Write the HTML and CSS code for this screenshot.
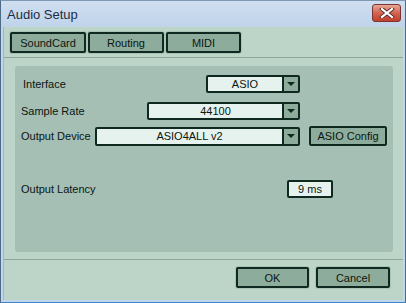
FILE: index.html
```html
<!DOCTYPE html>
<html lang="en">
<head>
    <meta charset="UTF-8">
    <title>Audio Setup</title>
    <link rel="stylesheet" href="styles.css">
</head>
<body>
<div class="window">
    <div class="titlebar">
        <span class="title">Audio Setup</span>
        <div class="close">
            <svg width="16" height="10" viewBox="0 0 16 10">
                <path d="M3 1 L13 9 M13 1 L3 9" stroke="#5a2a2a" stroke-width="4" stroke-linecap="square"/>
                <path d="M3 1 L13 9 M13 1 L3 9" stroke="#ffffff" stroke-width="2.2" stroke-linecap="square"/>
            </svg>
        </div>
    </div>
    <div class="content">
        <div class="tabs">
            <div class="btn tab">SoundCard</div>
            <div class="btn tab">Routing</div>
            <div class="btn tab">MIDI</div>
        </div>
        <div class="panel">
            <div class="row row-interface">
                <span class="label">Interface</span>
                <div class="select w-interface"><span class="value">ASIO</span><span class="arrow"></span></div>
            </div>
            <div class="row row-rate">
                <span class="label">Sample Rate</span>
                <div class="select w-rate"><span class="value">44100</span><span class="arrow"></span></div>
            </div>
            <div class="row row-device">
                <span class="label">Output Device</span>
                <div class="select w-device"><span class="value">ASIO4ALL v2</span><span class="arrow"></span></div>
                <div class="btn config">ASIO Config</div>
            </div>
            <div class="row row-latency">
                <span class="label">Output Latency</span>
                <div class="field">9 ms</div>
            </div>
        </div>
        <div class="footer">
            <div class="btn ok">OK</div>
            <div class="btn cancel">Cancel</div>
        </div>
    </div>
</div>
</body>
</html>
```

FILE: styles.css
```css
* {
    margin: 0;
    padding: 0;
    box-sizing: border-box;
}

body {
    width: 406px;
    height: 303px;
    overflow: hidden;
    font-family: "Liberation Sans", Arial, sans-serif;
    font-size: 11px;
    color: #0b1512;
}

.window {
    width: 406px;
    height: 303px;
    display: flex;
    flex-direction: column;
    background: #c2d6eb;
    border: 1px solid #4d6a86;
    border-top-color: #7f98b2;
    border-bottom-color: #3d86c6;
}

.titlebar {
    height: 26px;
    display: flex;
    align-items: center;
    justify-content: space-between;
    padding: 0 4px 0 6px;
    background: linear-gradient(#cfdff1, #bfd3ea);
}

.title {
    font-family: "Liberation Sans", Arial, sans-serif;
    font-size: 13px;
    color: #1c2d44;
}

.close {
    width: 29px;
    height: 18px;
    border: 1px solid #7b3431;
    border-radius: 3px;
    background: linear-gradient(#e9a896, #d26450 50%, #c2402c);
    display: flex;
    align-items: center;
    justify-content: center;
    margin-top: -3px;
}

.content {
    flex: 1;
    margin: 0 2px 2px 2px;
    background: #bcd5c8;
    display: flex;
    flex-direction: column;
    border-left: 1px solid #9db8ce;
}

.btn {
    background: #8eac9b;
    border: 2px solid #0f2820;
    border-radius: 2px;
    box-shadow: 0 0 0 1px #aac3b7;
    display: flex;
    align-items: center;
    justify-content: center;
}

.tabs {
    display: flex;
    gap: 2px;
    padding: 5px 0 0 6px;
    height: 31px;
    border-bottom: 1px solid #8da497;
}

.tab {
    width: 76px;
    height: 21px;
}

.tab:last-child {
    width: 75px;
}

.panel {
    margin: 8px 10px 0 11px;
    height: 186px;
    background: #a5bfb4;
    border-radius: 3px;
    padding: 9px 6px 0 6px;
    display: flex;
    flex-direction: column;
}

.row {
    display: flex;
    align-items: center;
}

.label {
    flex: 1;
}

.row-interface {
    height: 18px;
}

.row-interface .label {
    padding-left: 2px;
}

.row-rate {
    height: 18px;
    margin-top: 9px;
}

.row-device {
    height: 20px;
    margin-top: 6px;
}

.row-latency {
    height: 18px;
    margin-top: 34px;
}

.select {
    height: 18px;
    display: flex;
    border: 2px solid #0f2820;
    border-radius: 2px;
    background: #e6f2ee;
    margin-right: 87px;
}

.row-device .select {
    margin-right: 0;
    height: 19px;
}

.w-interface {
    width: 94px;
}

.w-rate {
    width: 153px;
}

.w-device {
    width: 205px;
}

.value {
    flex: 1;
    text-align: center;
    line-height: 14px;
}

.arrow {
    width: 16px;
    background: #8eac9b;
    border-left: 2px solid #0f2820;
    display: flex;
    align-items: center;
    justify-content: center;
}

.arrow::after {
    content: "";
    border-left: 4px solid transparent;
    border-right: 4px solid transparent;
    border-top: 4px solid #0f2820;
}

.config {
    width: 78px;
    height: 20px;
    margin-left: 9px;
}

.field {
    width: 46px;
    height: 18px;
    border: 2px solid #0f2820;
    border-radius: 2px;
    background: #e6f2ee;
    text-align: center;
    line-height: 14px;
    margin-right: 54px;
}

.footer {
    margin-top: 7px;
    border-top: 1px solid #8da497;
    display: flex;
    justify-content: flex-end;
    gap: 7px;
    padding: 7px 13px 0 0;
}

.ok {
    width: 73px;
    height: 21px;
}

.cancel {
    width: 74px;
    height: 21px;
}
```
